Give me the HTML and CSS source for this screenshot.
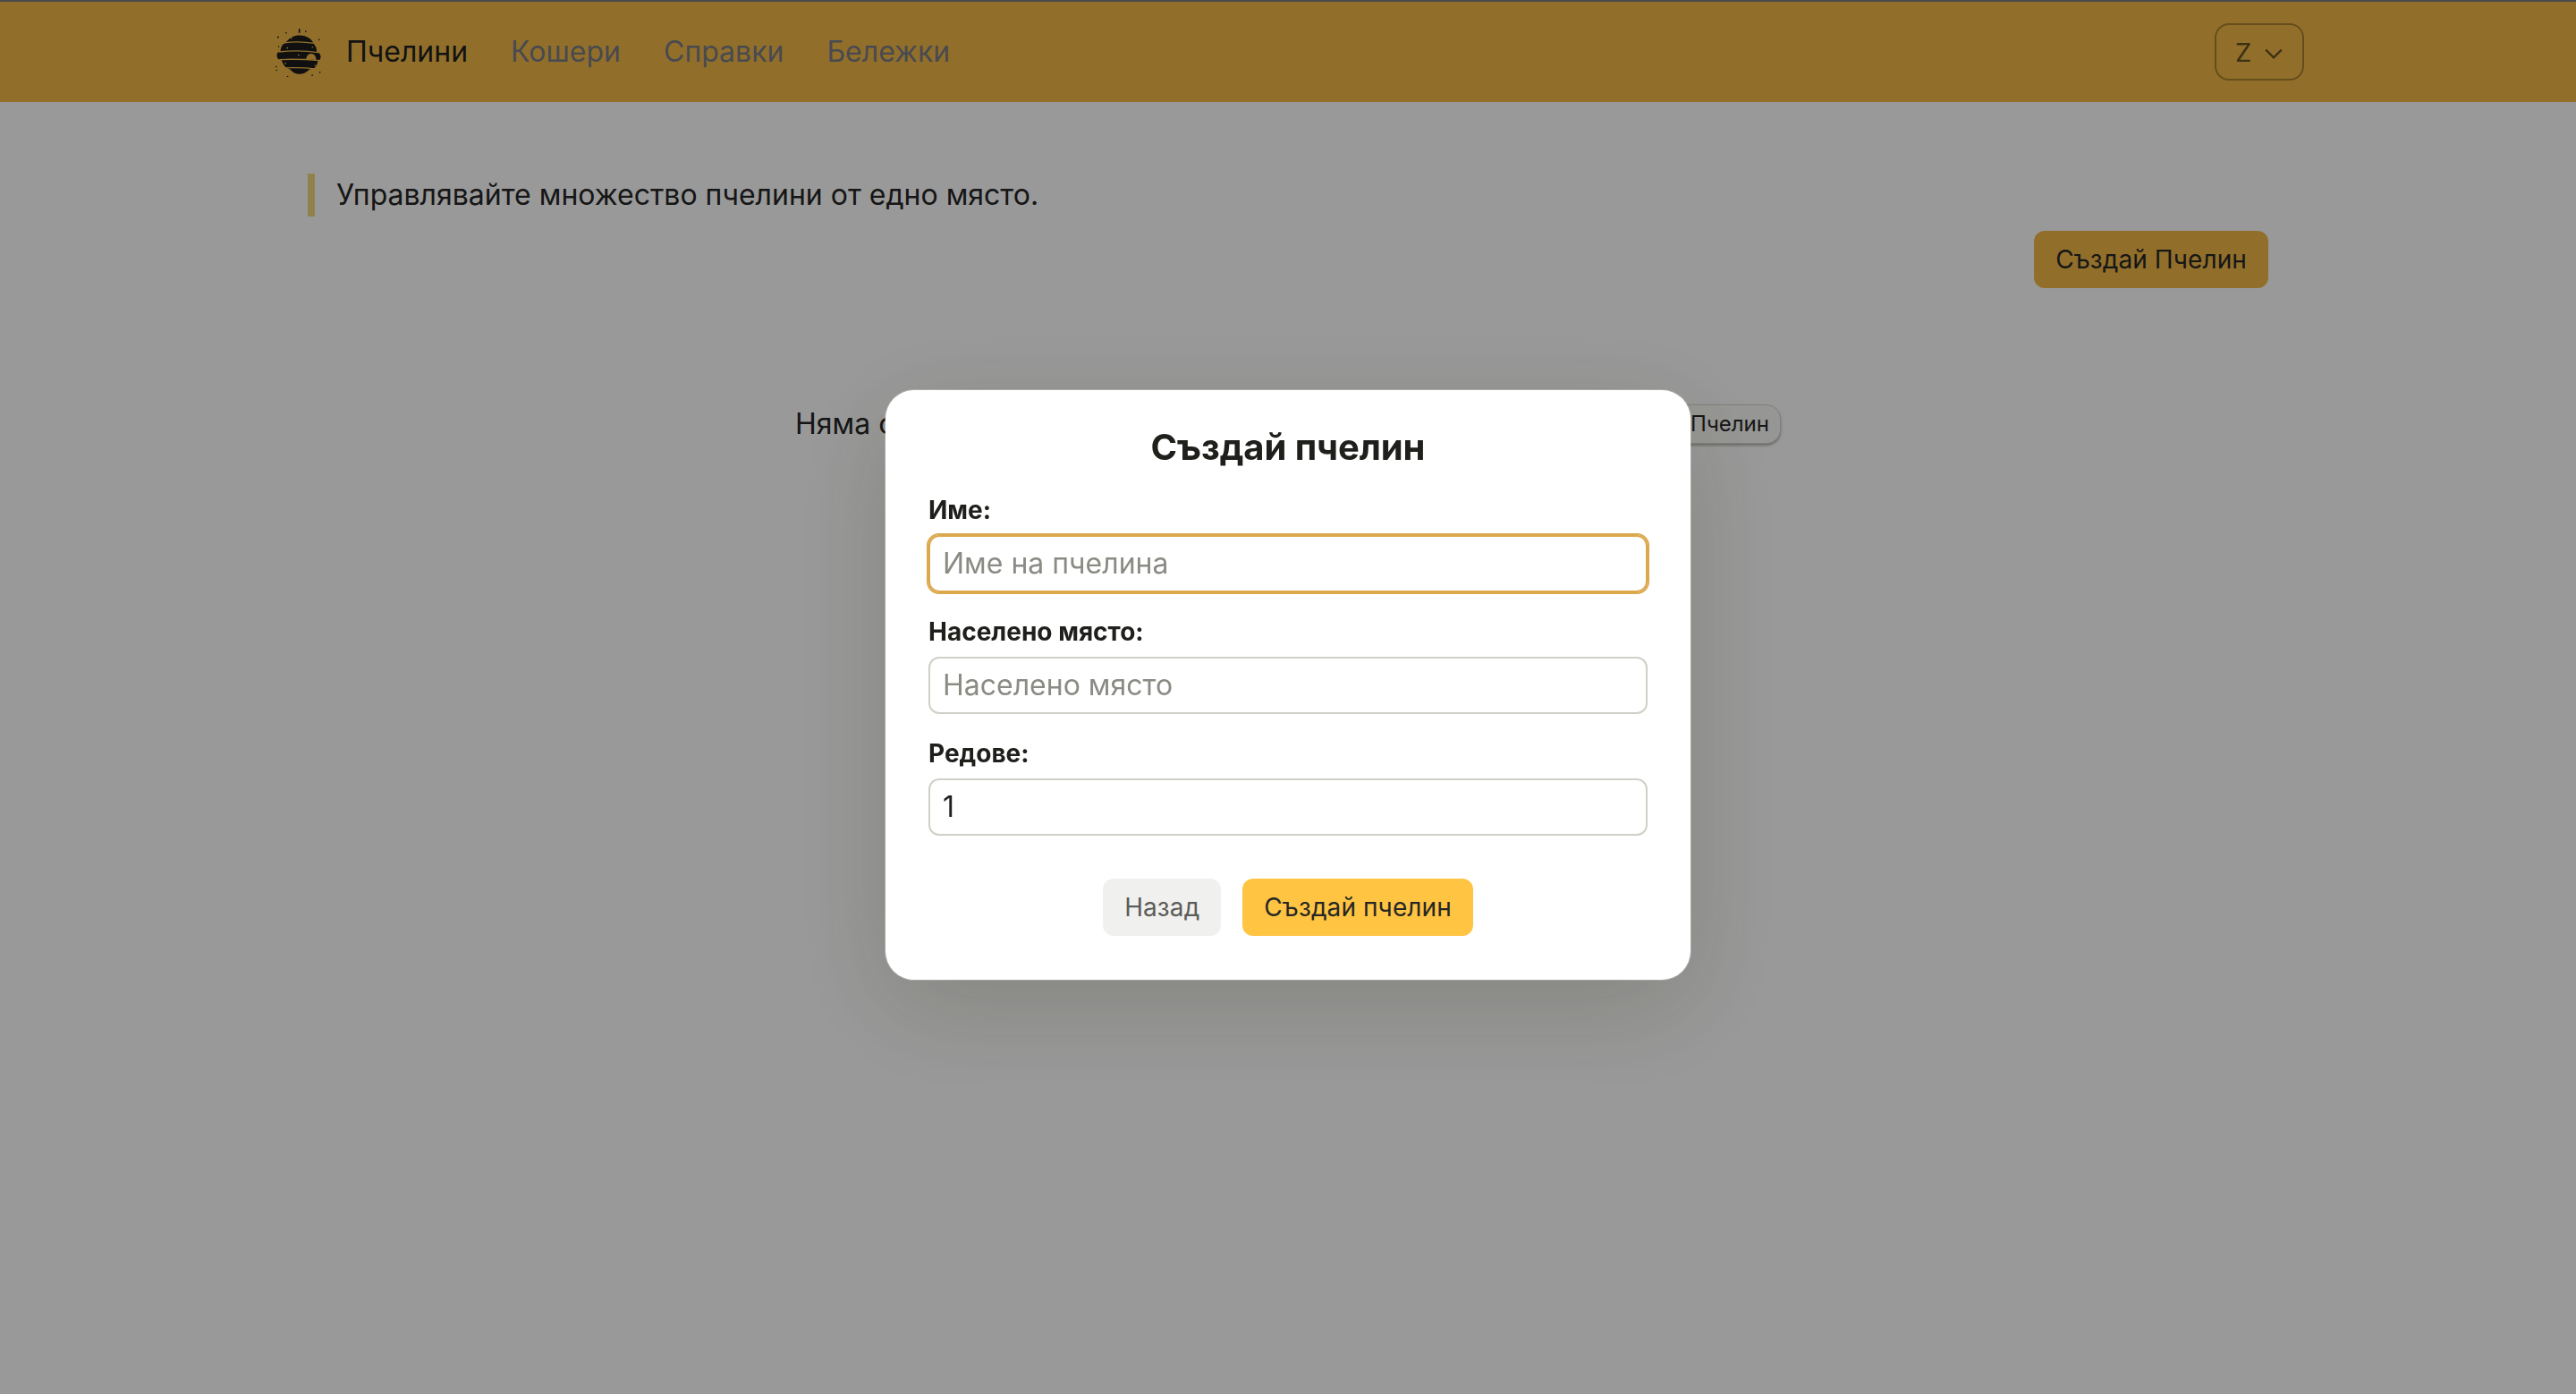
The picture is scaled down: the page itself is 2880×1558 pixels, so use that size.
FILE: index.html
```html
<!DOCTYPE html>
<html lang="bg">
  <head>
    <meta charset="UTF-8" />
    <meta name="viewport" content="width=device-width, initial-scale=1.0" />
    <title>Пчелини</title>
    <link rel="stylesheet" href="styles.css">
  </head>
  <body>
    <nav class="navbar">
      <div class="navbar-inner">
        <div class="nav-left">
          <svg class="logo" viewBox="50 30 160 165" aria-hidden="true">
            <path fill="#1c1c1c" d="M134 55 C155 55 172 65 179 78 L190 96 C192 103 192 108 192 110 L200 115 C207 122 207 130 203 137 L196 142 C195 152 190 160 184 166 L168 170 C158 181 146 186 134 186 C122 186 110 181 102 170 L88 164 C81 156 76 148 74 140 L62 135 C56 128 56 118 62 112 L70 109 C70 100 73 92 78 86 L90 77 C100 63 116 55 134 55 Z" />
            <g fill="none" stroke="#f2b949" stroke-width="4">
              <path d="M78 81 Q130 73 184 82" />
              <path d="M64 111 Q130 103 198 113" />
              <path d="M66 137 Q130 134 202 140" />
              <path d="M84 165 Q130 162 188 168" />
            </g>
            <g fill="#f2b949">
              <path d="M157 136 C156 125 164 117 174 117 C184 117 190 126 190 138 Z" />
              <circle cx="107" cy="65" r="2.5" />
              <circle cx="93" cy="98" r="2.5" />
              <circle cx="178" cy="95" r="2.5" />
              <circle cx="131" cy="122" r="2.5" />
              <circle cx="87" cy="150" r="2.5" />
              <circle cx="187" cy="157" r="2.5" />
            </g>
            <g fill="#1c1c1c">
              <rect x="131" y="33" width="5" height="14" />
              <circle cx="89" cy="47" r="2.5" />
              <circle cx="155" cy="42" r="2.5" />
              <circle cx="62" cy="61" r="3" />
              <circle cx="200" cy="70" r="2.5" />
              <circle cx="64" cy="93" r="2.5" />
              <circle cx="55" cy="161" r="2.5" />
              <circle cx="57" cy="173" r="2.5" />
              <circle cx="94" cy="194" r="2.5" />
              <circle cx="177" cy="190" r="2.5" />
              <circle cx="203" cy="180" r="2.5" />
            </g>
          </svg>
          <a class="nav-link active" href="#">Пчелини</a>
          <a class="nav-link" href="#">Кошери</a>
          <a class="nav-link" href="#">Справки</a>
          <a class="nav-link" href="#">Бележки</a>
        </div>
        <button class="user-btn" type="button">
          Z
          <svg class="chevron" viewBox="0 0 20 20" aria-hidden="true">
            <path d="M2 6 L10 14 L18 6" />
          </svg>
        </button>
      </div>
    </nav>

    <main class="container">
      <p class="intro">Управлявайте множество пчелини от едно място.</p>
      <div class="actions">
        <button class="btn btn-primary" type="button">Създай Пчелин</button>
      </div>
      <div class="empty">
        <span>Няма създадени пчелини.</span>
        <button class="btn-small" type="button">Създай Пчелин</button>
      </div>
    </main>

    <div class="overlay">
      <form class="modal">
        <h2 class="modal-title">Създай пчелин</h2>
        <div class="field">
          <label for="name">Име:</label>
          <input class="input input-focus" type="text" id="name" placeholder="Име на пчелина" />
        </div>
        <div class="field">
          <label for="place">Населено място:</label>
          <input class="input" type="text" id="place" placeholder="Населено място" />
        </div>
        <div class="field">
          <label for="rows">Редове:</label>
          <input class="input" type="number" id="rows" value="1" />
        </div>
        <div class="modal-btns">
          <button class="btn btn-back" type="button">Назад</button>
          <button class="btn btn-create" type="submit">Създай пчелин</button>
        </div>
      </form>
    </div>
  </body>
</html>
```

FILE: styles.css
```css
* {
  box-sizing: border-box;
}
html,
body {
  margin: 0;
  height: 100%;
}
body {
  background: #fff;
  color: #262626;
  font-family: Inter, "Noto Sans", sans-serif;
  font-size: 32px;
  line-height: 48px;
}
button,
input {
  font-family: inherit;
}

.navbar {
  height: 114px;
  background: #f2b949;
  border-top: 2px solid #7c7c7c;
}
.navbar-inner {
  max-width: 2304px;
  height: 112px;
  margin: 0 auto;
  padding: 0 16px 0 19px;
  display: flex;
  align-items: center;
  justify-content: space-between;
}
.nav-left {
  display: flex;
  align-items: center;
  gap: 48px;
}
.logo {
  width: 53px;
  height: 55px;
  margin-right: -21px;
}
.nav-link {
  color: #7a7c84;
  text-decoration: none;
}
.nav-link.active {
  color: #1f1f1f;
}
.user-btn {
  width: 100px;
  height: 64px;
  padding: 0;
  display: flex;
  align-items: center;
  justify-content: center;
  gap: 14px;
  background: transparent;
  border: 2px solid #a9812f;
  border-radius: 16px;
  color: #65501f;
  font-size: 29px;
}
.chevron {
  width: 22px;
  height: 22px;
  margin-top: 3px;
  fill: none;
  stroke: #65501f;
  stroke-width: 2;
}

.container {
  max-width: 2304px;
  margin: 0 auto;
  padding: 80px 56px 0;
}
.intro {
  margin: 0;
  padding-left: 24px;
  border-left: 8px solid #f2d97f;
}
.actions {
  display: flex;
  justify-content: flex-end;
  margin-top: 16px;
}
.btn {
  height: 64px;
  padding: 0 24px;
  border: none;
  border-radius: 12px;
  font-size: 28px;
  letter-spacing: 0.1px;
  color: #262626;
}
.btn-primary {
  background: #f2b949;
}
.empty {
  width: 1102px;
  display: flex;
  justify-content: space-between;
  align-items: center;
  margin: 128px auto 0;
}
.btn-small {
  height: 44px;
  padding: 0 12px 2px;
  background: #fbfbf9;
  border: 1px solid #d6d6d0;
  border-radius: 16px;
  box-shadow: 0 2px 3px rgba(0, 0, 0, 0.3);
  color: #262626;
  font-size: 24px;
}

.overlay {
  position: fixed;
  inset: 0;
  padding-top: 436px;
  display: flex;
  justify-content: center;
  align-items: flex-start;
  background: rgba(0, 0, 0, 0.4);
}
.modal {
  width: 900px;
  height: 659px;
  padding: 42px 48px 48px;
  background: #fff;
  border-radius: 32px;
  box-shadow: 0 0 0 1px rgba(255, 255, 255, 0.2), 0 30px 110px rgba(40, 40, 10, 0.18);
  color: #1f1f1c;
}
.modal-title {
  margin: 0 0 28px;
  font-size: 40px;
  line-height: 44px;
  font-weight: 700;
  letter-spacing: -0.1px;
  text-align: center;
}
.field {
  margin-bottom: 24px;
}
.field label {
  display: block;
  margin-bottom: 8px;
  font-size: 28px;
  line-height: 40px;
  font-weight: 700;
}
.input {
  display: block;
  width: 100%;
  height: 64px;
  padding: 0 14px 2px;
  background: #fff;
  border: 2px solid #d0d0c8;
  border-radius: 12px;
  color: #1f1f1c;
  font-size: 32px;
}
.input::placeholder {
  color: #8b8b85;
}
.input-focus {
  border-color: #dca84e;
  outline: 2px solid #dca84e;
}
.modal-btns {
  display: flex;
  justify-content: center;
  gap: 24px;
  margin-top: 48px;
}
.btn-back {
  background: #f0f0ee;
  color: #5c5c58;
}
.btn-create {
  background: #ffc442;
}
```
